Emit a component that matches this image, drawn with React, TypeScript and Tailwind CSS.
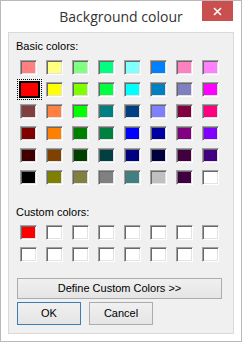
import React from "react";

const basic: string[][] = [
  ["#FF8080", "#FFFF80", "#80FF80", "#00FF80", "#80FFFF", "#0080FF", "#FF80C0", "#FF80FF"],
  ["#FF0000", "#FFFF00", "#80FF00", "#00FF40", "#00FFFF", "#0080C0", "#8080C0", "#FF00FF"],
  ["#804040", "#FF8040", "#00FF00", "#008080", "#004080", "#8080FF", "#800040", "#FF0080"],
  ["#800000", "#FF8000", "#008000", "#008040", "#0000FF", "#0000A0", "#800080", "#8000FF"],
  ["#400000", "#804000", "#004000", "#004040", "#000080", "#000040", "#400040", "#400080"],
  ["#000000", "#808000", "#808040", "#808080", "#408080", "#C0C0C0", "#400040", "#FFFFFF"],
];

const custom: string[] = ["#FF0000", ...Array(15).fill("#FFFFFF")];

function Swatch({ color, selected }: { color: string; selected?: boolean }) {
  if (selected) {
    return (
      <div className="relative w-[17px] h-[15px]">
        <div className="absolute -left-[3px] -top-[3px] -right-[5px] -bottom-[3px] border border-dotted border-black" />
        <div className="absolute -left-[1px] -top-[1px] -right-[3px] -bottom-[1px] border-2 border-black" style={{ backgroundColor: color }} />
      </div>
    );
  }
  return (
    <div
      className="w-[17px] h-[15px] border border-t-[#a0a0a0] border-l-[#a0a0a0] border-r-[#ffffff] border-b-[#ffffff] shadow-[inset_1px_1px_0_#696969,inset_-1px_-1px_0_#e3e3e3]"
      style={{ backgroundColor: color }}
    />
  );
}

export default function App() {
  const font = { fontFamily: '"Liberation Sans", Arial, sans-serif' };
  return (
    <div className="relative w-[242px] h-[342px] bg-white border border-[#b9b9b9] flex flex-col">
      <div
        className="h-[31px] flex items-center justify-center text-[14px] text-[#333333] pb-[1px]"
        style={{ fontFamily: '"Open Sans", "Noto Sans", sans-serif' }}
      >
        Background colour
      </div>
      <div className="absolute top-0 right-[8px] w-[31px] h-[20px] bg-[#c9504e] flex items-center justify-center">
        <svg width="9" height="9" viewBox="0 0 9 9">
          <path d="M1 1 L8 8 M8 1 L1 8" stroke="#ffffff" strokeWidth="1.6" />
        </svg>
      </div>
      <div
        className="mx-[7px] mb-[7px] flex-1 border border-[#d9d9d9] bg-[#f0f0f0] flex flex-col pl-[7px] text-[11px] text-black"
        style={font}
      >
        <div className="mt-[7px] h-[13px] leading-[13px]">Basic colors:</div>
        <div className="mt-[7px] ml-[4px] grid grid-cols-[repeat(8,17px)] gap-x-[9px] gap-y-[7px]">
          {basic.map((row, r) =>
            row.map((c, i) => <Swatch key={`${r}-${i}`} color={c} selected={r === 1 && i === 0} />)
          )}
        </div>
        <div className="mt-[21px] h-[13px] leading-[13px]">Custom colors:</div>
        <div className="mt-[6px] ml-[4px] grid grid-cols-[repeat(8,17px)] gap-x-[9px] gap-y-[7px]">
          {custom.map((c, i) => (
            <Swatch key={i} color={c} />
          ))}
        </div>
        <div className="mt-[16px] ml-[1px] w-[205px] h-[21px] border border-[#acacac] bg-gradient-to-b from-[#f0f0f0] to-[#e5e5e5] flex items-center justify-center">
          Define Custom Colors &gt;&gt;
        </div>
        <div className="mt-[3px] ml-[1px] flex gap-[8px]">
          <div className="w-[64px] h-[23px] border border-[#3c7fb1] bg-gradient-to-b from-[#f0f0f0] to-[#e5e5e5] flex items-center justify-center">
            OK
          </div>
          <div className="w-[64px] h-[23px] border border-[#acacac] bg-gradient-to-b from-[#f0f0f0] to-[#e5e5e5] flex items-center justify-center">
            Cancel
          </div>
        </div>
      </div>
    </div>
  );
}
